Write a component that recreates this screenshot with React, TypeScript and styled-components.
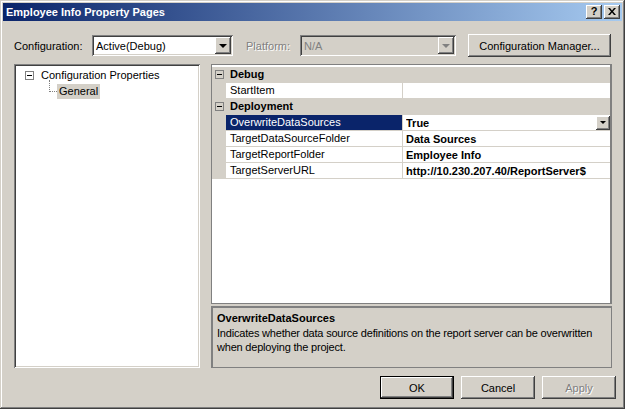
import React from 'react';
import styled, { createGlobalStyle, css } from 'styled-components';

const GlobalStyle = createGlobalStyle`
    html, body {
        margin: 0;
        padding: 0;
        background: #d4d0c8;
    }
    body {
        font-family: "Liberation Sans", Arial, sans-serif;
        font-size: 11px;
        color: #000;
    }
    * { box-sizing: border-box; }
`;

const raised = css`
    background: #d4d0c8;
    box-shadow: inset -1px -1px #404040, inset 1px 1px #ffffff, inset -2px -2px #808080, inset 2px 2px #d4d0c8;
`;

const sunken = css`
    box-shadow: inset 1px 1px #808080, inset -1px -1px #ffffff, inset 2px 2px #404040, inset -2px -2px #d4d0c8;
`;

const Window = styled.div`
    width: 625px;
    height: 409px;
    padding: 3px;
    display: flex;
    flex-direction: column;
    background: #d4d0c8;
    box-shadow: inset -1px -1px #404040, inset 1px 1px #d4d0c8, inset -2px -2px #808080, inset 2px 2px #ffffff;
`;

const TitleBar = styled.div`
    height: 18px;
    display: flex;
    align-items: center;
    justify-content: space-between;
    padding-left: 3px;
    padding-right: 2px;
    background: linear-gradient(to right, #0a246a, #a6caf0);
`;

const Title = styled.span`
    color: #fff;
    font-weight: bold;
    font-size: 11px;
`;

const CaptionButtons = styled.div`
    display: flex;
    gap: 2px;
`;

const CaptionButton = styled.div`
    ${raised};
    width: 16px;
    height: 14px;
    display: flex;
    align-items: center;
    justify-content: center;
    font-weight: bold;
    font-size: 11px;
    line-height: 1;
    padding-bottom: 1px;
`;

const Body = styled.div`
    flex: 1;
    display: flex;
    flex-direction: column;
    padding: 13px 0 0 11px;
`;

const ConfigRow = styled.div`
    display: flex;
    align-items: center;
    height: 23px;
    padding-right: 11px;
`;

const Label = styled.span<{ $w: number; $disabled?: boolean }>`
    width: ${p => p.$w}px;
    color: ${p => (p.$disabled ? '#808080' : '#000')};
    text-shadow: ${p => (p.$disabled ? '1px 1px #fff' : 'none')};
`;

const Combo = styled.div<{ $w: number; $disabled?: boolean }>`
    ${sunken};
    width: ${p => p.$w}px;
    height: 21px;
    padding: 2px;
    display: flex;
    align-items: center;
    background: ${p => (p.$disabled ? '#d4d0c8' : '#fff')};
    color: ${p => (p.$disabled ? '#808080' : '#000')};
`;

const ComboText = styled.span`
    flex: 1;
    padding-left: 2px;
`;

const ArrowButton = styled.div<{ $w?: number; $h?: number }>`
    ${raised};
    width: ${p => p.$w ?? 16}px;
    height: ${p => p.$h ?? 17}px;
    display: flex;
    align-items: center;
    justify-content: center;
`;

const Triangle = styled.span<{ $size?: number; $color?: string }>`
    width: 0;
    height: 0;
    border-left: ${p => p.$size ?? 4}px solid transparent;
    border-right: ${p => p.$size ?? 4}px solid transparent;
    border-top: ${p => p.$size ?? 4}px solid ${p => p.$color ?? '#000'};
`;

const Button = styled.div<{ $w: number; $default?: boolean; $disabled?: boolean }>`
    ${raised};
    width: ${p => p.$w}px;
    height: 23px;
    display: flex;
    align-items: center;
    justify-content: center;
    color: ${p => (p.$disabled ? '#808080' : '#000')};
    text-shadow: ${p => (p.$disabled ? '1px 1px #fff' : 'none')};
    ${p =>
        p.$default &&
        css`
            box-shadow: inset 0 0 0 1px #000, inset -2px -2px #404040, inset 2px 2px #ffffff,
                inset -3px -3px #808080;
        `}
`;

const Spacer = styled.div<{ $w: number }>`
    width: ${p => p.$w}px;
    flex-shrink: 0;
`;

const Main = styled.div`
    display: flex;
    gap: 11px;
    margin-top: 7px;
    height: 304px;
    padding-right: 10px;
`;

const Tree = styled.div`
    ${sunken};
    width: 186px;
    background: #fff;
    padding: 3px 2px 2px 2px;
`;

const TreeRow = styled.div<{ $indent: number }>`
    height: 16px;
    display: flex;
    align-items: center;
    padding-left: ${p => p.$indent}px;
`;

const ExpandBox = styled.span<{ $bg?: string }>`
    width: 9px;
    height: 9px;
    border: 1px solid #808080;
    background: ${p => p.$bg ?? '#fff'};
    display: inline-flex;
    align-items: center;
    justify-content: center;
    flex-shrink: 0;
    &::after {
        content: '';
        width: 5px;
        height: 1px;
        background: #000;
    }
`;

const TreeLabel = styled.span<{ $selected?: boolean }>`
    margin-left: ${p => (p.$selected ? 0 : 5)}px;
    padding: 0 2px;
    height: 15px;
    line-height: 15px;
    background: ${p => (p.$selected ? '#d4d0c8' : 'transparent')};
`;

const Connector = styled.span`
    align-self: flex-start;
    margin-top: -3px;
    width: 8px;
    height: 12px;
    border-left: 1px dotted #808080;
    border-bottom: 1px dotted #808080;
    flex-shrink: 0;
`;

const RightCol = styled.div`
    flex: 1;
    display: flex;
    flex-direction: column;
    gap: 2px;
`;

const Grid = styled.div`
    height: 240px;
    background: #fff;
    border: 1px solid #808080;
    border-right-width: 2px;
    padding-top: 2px;
`;

const GridRow = styled.div<{ $category?: boolean }>`
    display: grid;
    grid-template-columns: 14px 177px 1fr;
    height: 16px;
    border-bottom: 1px solid #d4d0c8;
    background: ${p => (p.$category ? '#d4d0c8' : '#fff')};
    font-weight: ${p => (p.$category ? 'bold' : 'normal')};
`;

const MarginCell = styled.div`
    background: #d4d0c8;
    display: flex;
    align-items: center;
    justify-content: center;
`;

const NameCell = styled.div<{ $selected?: boolean; $span?: boolean }>`
    padding-left: 4px;
    line-height: 15px;
    white-space: nowrap;
    overflow: hidden;
    grid-column: ${p => (p.$span ? '2 / 4' : 'auto')};
    border-right: ${p => (p.$span ? 'none' : '1px solid #d4d0c8')};
    background: ${p => (p.$selected ? '#0a246a' : 'transparent')};
    color: ${p => (p.$selected ? '#fff' : '#000')};
`;

const ValueCell = styled.div`
    display: flex;
    align-items: center;
    padding-left: 3px;
    font-weight: bold;
    white-space: nowrap;
    overflow: hidden;
`;

const ValueText = styled.span`
    flex: 1;
    overflow: hidden;
`;

const Description = styled.div`
    flex: 1;
    border: 1px solid #808080;
    border-width: 2px 1px 1px 2px;
    padding: 3px 4px;
    line-height: 14px;
    letter-spacing: -0.2px;
`;

const DescTitle = styled.div`
    font-weight: bold;
    letter-spacing: 0;
    margin-bottom: 1px;
`;

const ButtonRow = styled.div`
    display: flex;
    justify-content: flex-end;
    gap: 7px;
    margin-top: 8px;
    padding-right: 6px;
`;

type Prop = { name: string; value: string; selected?: boolean; dropdown?: boolean };
type Category = { name: string; props: Prop[] };

const categories: Category[] = [
    { name: 'Debug', props: [{ name: 'StartItem', value: '' }] },
    {
        name: 'Deployment',
        props: [
            { name: 'OverwriteDataSources', value: 'True', selected: true, dropdown: true },
            { name: 'TargetDataSourceFolder', value: 'Data Sources' },
            { name: 'TargetReportFolder', value: 'Employee Info' },
            { name: 'TargetServerURL', value: 'http://10.230.207.40/ReportServer$' }
        ]
    }
];

export default function App() {
    return (
        <>
            <GlobalStyle />
            <Window>
                <TitleBar>
                    <Title>Employee Info Property Pages</Title>
                    <CaptionButtons>
                        <CaptionButton>?</CaptionButton>
                        <CaptionButton>
                            <svg width="8" height="7" viewBox="0 0 8 7">
                                <path d="M0 0 L2 0 L4 2.5 L6 0 L8 0 L5 3.5 L8 7 L6 7 L4 4.5 L2 7 L0 7 L3 3.5 Z" fill="#000" />
                            </svg>
                        </CaptionButton>
                    </CaptionButtons>
                </TitleBar>
                <Body>
                    <ConfigRow>
                        <Label $w={78}>Configuration:</Label>
                        <Combo $w={141}>
                            <ComboText>Active(Debug)</ComboText>
                            <ArrowButton>
                                <Triangle />
                            </ArrowButton>
                        </Combo>
                        <Spacer $w={13} />
                        <Label $w={54} $disabled>
                            Platform:
                        </Label>
                        <Combo $w={156} $disabled>
                            <ComboText>N/A</ComboText>
                            <ArrowButton>
                                <Triangle $color="#808080" />
                            </ArrowButton>
                        </Combo>
                        <Spacer $w={12} />
                        <Button $w={143}>Configuration Manager...</Button>
                    </ConfigRow>

                    <Main>
                        <Tree>
                            <TreeRow $indent={9}>
                                <ExpandBox />
                                <TreeLabel>Configuration Properties</TreeLabel>
                            </TreeRow>
                            <TreeRow $indent={33}>
                                <Connector />
                                <TreeLabel $selected>General</TreeLabel>
                            </TreeRow>
                        </Tree>

                        <RightCol>
                            <Grid>
                                {categories.map(cat => (
                                    <React.Fragment key={cat.name}>
                                        <GridRow $category>
                                            <MarginCell>
                                                <ExpandBox $bg="#d4d0c8" />
                                            </MarginCell>
                                            <NameCell $span>{cat.name}</NameCell>
                                        </GridRow>
                                        {cat.props.map(p => (
                                            <GridRow key={p.name}>
                                                <MarginCell />
                                                <NameCell $selected={p.selected}>{p.name}</NameCell>
                                                <ValueCell>
                                                    <ValueText>{p.value}</ValueText>
                                                    {p.dropdown && (
                                                        <ArrowButton $w={14} $h={14}>
                                                            <Triangle $size={3} />
                                                        </ArrowButton>
                                                    )}
                                                </ValueCell>
                                            </GridRow>
                                        ))}
                                    </React.Fragment>
                                ))}
                            </Grid>
                            <Description>
                                <DescTitle>OverwriteDataSources</DescTitle>
                                Indicates whether data source definitions on the report server can be overwritten
                                when deploying the project.
                            </Description>
                        </RightCol>
                    </Main>

                    <ButtonRow>
                        <Button $w={74} $default>
                            OK
                        </Button>
                        <Button $w={74}>Cancel</Button>
                        <Button $w={74} $disabled>
                            Apply
                        </Button>
                    </ButtonRow>
                </Body>
            </Window>
        </>
    );
}
